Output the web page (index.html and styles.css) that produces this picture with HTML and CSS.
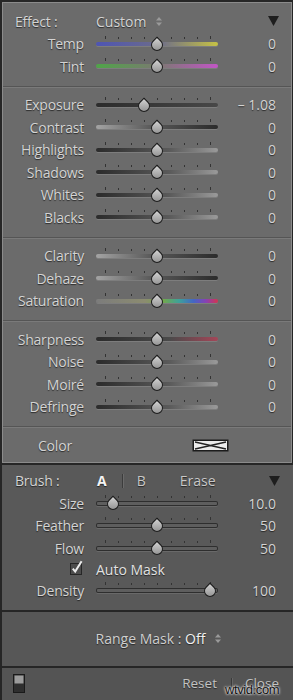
FILE: index.html
```html
<!DOCTYPE html>
<html>
<head>
<meta charset="utf-8">
<meta name="viewport" content="width=device-width, initial-scale=1.0">
<link rel="stylesheet" href="styles.css">
</head>
<body>

<div class="panel">

	<div class="top">
		<div class="group first">
			<div class="row head">
				<span class="lbl">Effect :</span>
				<span class="preset">Custom
					<svg class="updown" width="6" height="9" viewBox="0 0 6 9"><polygon points="0,3.5 3,0 6,3.5"/><polygon points="0,5.5 3,9 6,5.5"/></svg>
				</span>
				<svg class="tri" width="11" height="10" viewBox="0 0 11 10"><polygon points="0,0 11,0 5.5,10"/></svg>
			</div>
			<div class="row"><span class="lbl">Temp</span><div class="track temp"><i class="thumb" style="left:50%"></i></div><span class="val">0</span></div>
			<div class="row"><span class="lbl">Tint</span><div class="track tint"><i class="thumb" style="left:50%"></i></div><span class="val">0</span></div>
		</div>

		<div class="group">
			<div class="row"><span class="lbl">Exposure</span><div class="track dark"><i class="thumb" style="left:39%"></i></div><span class="val">&ndash; 1.08</span></div>
			<div class="row"><span class="lbl">Contrast</span><div class="track ld"><i class="thumb" style="left:50%"></i></div><span class="val">0</span></div>
			<div class="row"><span class="lbl">Highlights</span><div class="track dl"><i class="thumb" style="left:50%"></i></div><span class="val">0</span></div>
			<div class="row"><span class="lbl">Shadows</span><div class="track dl"><i class="thumb" style="left:50%"></i></div><span class="val">0</span></div>
			<div class="row"><span class="lbl">Whites</span><div class="track dl"><i class="thumb" style="left:50%"></i></div><span class="val">0</span></div>
			<div class="row"><span class="lbl">Blacks</span><div class="track dl"><i class="thumb" style="left:50%"></i></div><span class="val">0</span></div>
		</div>

		<div class="group">
			<div class="row"><span class="lbl">Clarity</span><div class="track ld"><i class="thumb" style="left:50%"></i></div><span class="val">0</span></div>
			<div class="row"><span class="lbl">Dehaze</span><div class="track ld"><i class="thumb" style="left:50%"></i></div><span class="val">0</span></div>
			<div class="row"><span class="lbl">Saturation</span><div class="track sat"><i class="thumb" style="left:50%"></i></div><span class="val">0</span></div>
		</div>

		<div class="group">
			<div class="row"><span class="lbl">Sharpness</span><div class="track sharp"><i class="thumb" style="left:50%"></i></div><span class="val">0</span></div>
			<div class="row"><span class="lbl">Noise</span><div class="track dl"><i class="thumb" style="left:50%"></i></div><span class="val">0</span></div>
			<div class="row"><span class="lbl">Moiré</span><div class="track dl"><i class="thumb" style="left:50%"></i></div><span class="val">0</span></div>
			<div class="row"><span class="lbl">Defringe</span><div class="track dl"><i class="thumb" style="left:50%"></i></div><span class="val">0</span></div>
		</div>

		<div class="group last">
			<div class="row color">
				<span class="lbl">Color</span>
				<svg class="swatch" width="37" height="13" viewBox="0 0 37 13">
					<rect x="0.5" y="0.5" width="36" height="12" fill="#1c1c1c"/>
					<rect x="2" y="2" width="33" height="9" fill="#ececec"/>
					<path d="M3 3 L18.5 6.5 L34 3 M3 10 L18.5 6.5 L34 10" stroke="#222" stroke-width="1.3" fill="none"/>
				</svg>
			</div>
		</div>
	</div>

	<div class="brush">
		<div class="row head">
			<span class="lbl">Brush :</span>
			<div class="modes">
				<span class="mode on">A</span>
				<span class="bar"></span>
				<span class="mode b">B</span>
				<span class="mode erase">Erase</span>
				<svg class="tri" width="11" height="10" viewBox="0 0 11 10"><polygon points="0,0 11,0 5.5,10"/></svg>
			</div>
		</div>
		<div class="row"><span class="lbl">Size</span><div class="track hollow"><i class="thumb" style="left:14%"></i></div><span class="val">10.0</span></div>
		<div class="row"><span class="lbl">Feather</span><div class="track hollow"><i class="thumb" style="left:50%"></i></div><span class="val">50</span></div>
		<div class="row"><span class="lbl">Flow</span><div class="track hollow"><i class="thumb" style="left:50%"></i></div><span class="val">50</span></div>
		<div class="row auto">
			<svg class="check" width="13" height="15" viewBox="0 0 13 15">
				<rect x="0.5" y="3.5" width="11" height="11" fill="#4c4c4c" stroke="#262626"/>
				<path d="M2.8 8.6 L5.2 11.6 L11.6 1.2" stroke="#ececec" stroke-width="2" fill="none"/>
			</svg>
			<span class="txt">Auto Mask</span>
		</div>
		<div class="row"><span class="lbl">Density</span><div class="track hollow"><i class="thumb" style="left:93.5%"></i></div><span class="val">100</span></div>
	</div>

	<div class="range">
		<span>Range Mask : <b>Off</b></span>
		<svg class="updown" width="6" height="9" viewBox="0 0 6 9"><polygon points="0,3.5 3,0 6,3.5"/><polygon points="0,5.5 3,9 6,5.5"/></svg>
	</div>

	<div class="foot">
		<svg class="toggle" width="12" height="19" viewBox="0 0 12 19">
			<rect x="0.5" y="0.5" width="11" height="18" fill="#2f2f2f" stroke="#1a1a1a"/>
			<rect x="1.5" y="1.5" width="9" height="8" fill="#9c9c9c"/>
		</svg>
		<span class="btn">Reset</span>
		<span class="bar"></span>
		<span class="btn">Close</span>
	</div>

	<span class="mark">wtvid.com</span>
</div>

</body>
</html>
```

FILE: styles.css
```css
body {
	margin: 0;
	padding: 0;
	background-color: #262626;
	font-family: "Open Sans", sans-serif;
	font-size: 14px;
	color: #d4d4d4;
}

.panel {
	position: relative;
	width: 290px;
	padding: 2px 1px 0 2px;
}

.top {
	background-color: #6b6b6b;
	border: 1px solid #8b8b8b;
}

.group {
	padding: 7px 0 8px;
}

.group + .group {
	border-top: 1px solid #555;
	box-shadow: inset 0 1px 0 #7a7a7a;
}

.group.last {
	padding-bottom: 5px;
}

.row {
	display: grid;
	grid-template-columns: 81px 122px 1fr;
	column-gap: 12px;
	align-items: center;
	height: 22.5px;
	padding-right: 15px;
	text-shadow: 0 1px 1px rgba(0, 0, 0, 0.6);
}

.lbl {
	text-align: right;
	white-space: nowrap;
	letter-spacing: -0.2px;
}

.val {
	text-align: right;
	white-space: nowrap;
}

/* header rows (Effect / Brush) */

.row.head .lbl {
	text-align: left;
	padding-left: 12px;
}

.preset {
	display: flex;
	align-items: center;
	gap: 10px;
}

.updown {
	fill: #9a9a9a;
}

.tri {
	justify-self: end;
	margin-right: -3px;
	fill: #1e1e1e;
}

/* sliders */

.track {
	position: relative;
	height: 4px;
	border-radius: 2px;
	box-shadow: 0 1px 0 rgba(255, 255, 255, 0.12);
}

.track::before {
	content: "";
	position: absolute;
	left: 9px;
	width: 106px;
	top: -5px;
	height: 2px;
	background: repeating-linear-gradient(to right, #333 0 1px, transparent 1px 13.125px);
}

.track::after {
	content: "";
	position: absolute;
	left: 9px;
	width: 104px;
	top: -6px;
	height: 3px;
	border-left: 1px solid #333;
	border-right: 1px solid #333;
}

.thumb {
	position: absolute;
	top: -3px;
	width: 10px;
	height: 10px;
	margin-left: -6px;
	border: 1px solid #1c1c1c;
	border-radius: 0 50% 50% 50%;
	transform: rotate(45deg);
	background: linear-gradient(135deg, #d2d2d2, #8c8c8c);
	z-index: 1;
}

.temp  { background: linear-gradient(to right, #4e55b4, #6b6b8c 50%, #c6c245); }
.tint  { background: linear-gradient(to right, #4fa548, #7a7a70 50%, #c256c6); }
.dark  { background: linear-gradient(to right, #2c2c2c, #484848); }
.dl    { background: linear-gradient(to right, #2b2b2b, #5a5a5a 60%, #9a9a9a); }
.ld    { background: linear-gradient(to right, #a4a4a4, #5a5a5a 45%, #2b2b2b); }
.sat   { background: linear-gradient(to right, #7c7c7c, #8c8c70 40%, #74a84c 55%, #3ea29a 68%, #4466c4 80%, #8642b4 90%, #d6344e); }
.sharp { background: linear-gradient(to right, #2b2b2b, #4a4a4a 60%, #a44658); }

.hollow {
	height: 5px;
	background: #5e5e5e;
	box-shadow: inset 0 0 0 1px #2e2e2e, 0 1px 0 rgba(255, 255, 255, 0.1);
}

/* color row */

.row.color {
	grid-template-columns: 189px 37px;
	column-gap: 0;
}

.row.color .lbl {
	text-align: left;
	padding-left: 35px;
}

.swatch {
	display: block;
}

/* brush section */

.brush {
	margin-top: 2px;
	padding: 5px 1px 7.5px;
	margin-right: -1px;
	background-color: #595959;
}

.brush .row {
	padding-right: 16px;
}

.modes {
	grid-column: 2 / 4;
	display: flex;
	align-items: center;
}

.mode {
	color: #c8c8c8;
}

.mode.on {
	color: #f4f4f4;
	font-weight: bold;
	margin-left: 1px;
}

.modes .bar {
	width: 1px;
	height: 14px;
	margin-left: 15px;
	background: #3c3c3c;
	box-shadow: 1px 0 0 #6a6a6a;
}

.mode.b {
	margin-left: 14px;
}

.mode.erase {
	margin-left: 34px;
}

.modes .tri {
	margin-left: auto;
	margin-right: -4px;
}

.row.auto {
	height: 16px;
	padding-bottom: 4px;
}

.check {
	justify-self: end;
	margin-right: 1px;
	margin-top: -3px;
}

.row.auto .txt {
	grid-column: 2 / 4;
	color: #e2e2e2;
}

/* range mask */

.range {
	display: flex;
	justify-content: center;
	align-items: center;
	gap: 10px;
	height: 54px;
	margin-top: 2px;
	margin-right: -1px;
	padding-left: 22px;
	background-color: #575757;
	color: #cfcfcf;
	text-shadow: 0 1px 1px rgba(0, 0, 0, 0.55);
}

.range b {
	font-weight: normal;
	color: #f2f2f2;
}

/* footer */

.foot {
	display: flex;
	align-items: center;
	height: 31px;
	margin-top: 2px;
	margin-right: -1px;
	padding: 0 14px 2px 11px;
	background-color: #545454;
	color: #c2c2c2;
	font-size: 13.5px;
	text-shadow: 0 1px 1px rgba(0, 0, 0, 0.5);
}

.toggle {
	display: block;
}

.foot .btn:first-of-type {
	margin-left: auto;
}

.foot .bar {
	width: 1px;
	height: 11px;
	margin: 0 13px 0 14px;
	background: #3a3a3a;
	box-shadow: 1px 0 0 #666;
}

.mark {
	position: absolute;
	left: 225px;
	top: 682px;
	font-family: "Liberation Sans", sans-serif;
	font-size: 13px;
	letter-spacing: -0.4px;
	color: #111;
	text-shadow: 0 0 2px #fff, 0 0 3px #fff;
}
```
